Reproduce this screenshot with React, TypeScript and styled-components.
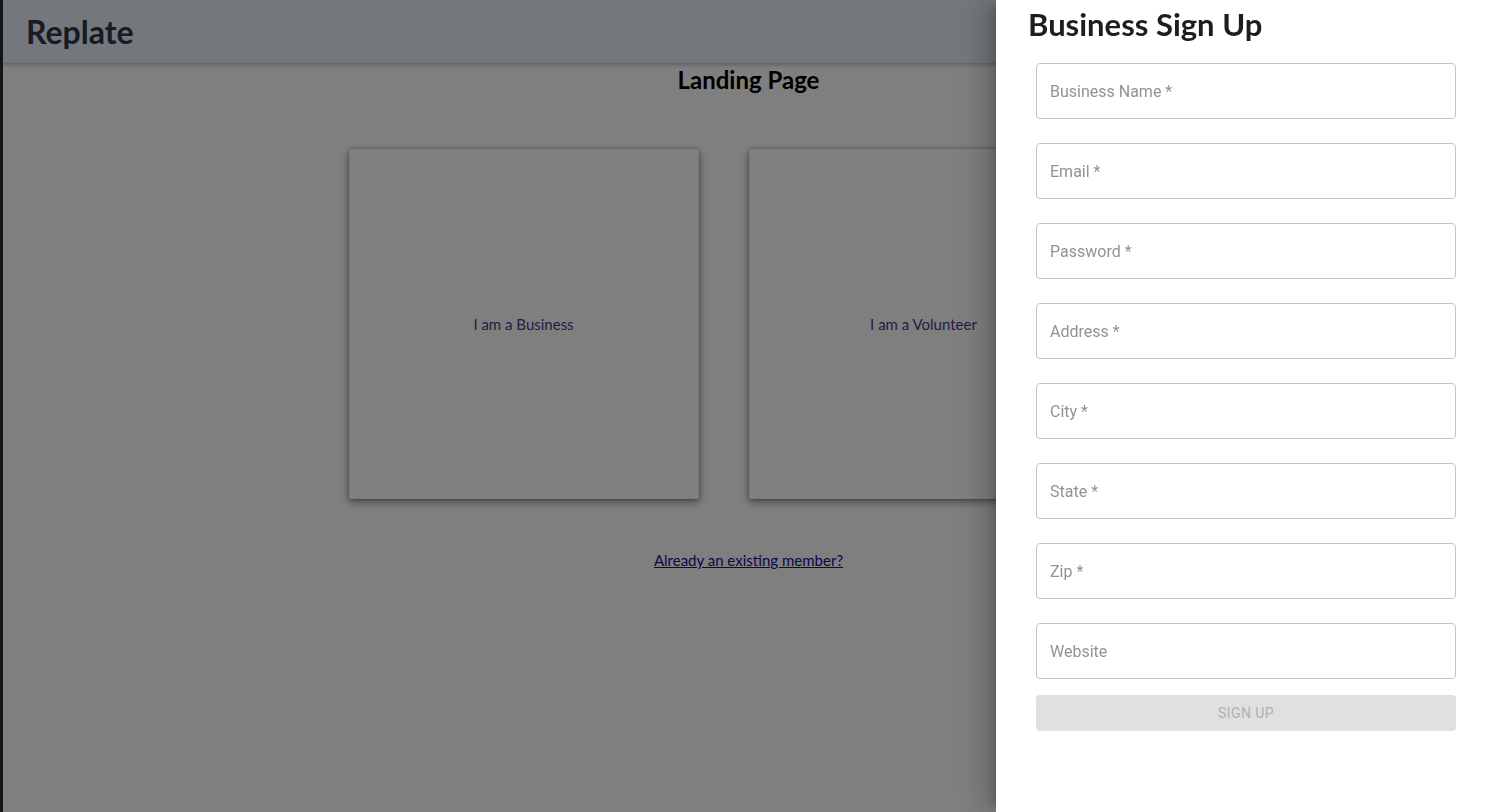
import React from 'react';
import styled, { createGlobalStyle } from 'styled-components';

// --- STYLES ---
const GlobalStyle = createGlobalStyle`
  html, body {
    margin: 0;
    padding: 0;
    height: 100%;
  }
  body {
    background: #fff;
    font-family: "Lato", "Liberation Sans", sans-serif;
    border-left: 3px solid #2a2a2a;
    overflow: hidden;
  }
`;

const Page = styled.div`
  min-height: 812px;
  display: flex;
  flex-direction: column;
  background: #fff;
`;

const Header = styled.header`
  height: 63px;
  background: #e8eef6;
  display: flex;
  align-items: center;
  padding-left: 23px;
  box-shadow: 0 2px 4px rgba(0, 0, 0, 0.25);
`;

const Brand = styled.h1`
  margin: 0;
  font-size: 32px;
  font-weight: 700;
  color: #30354c;
  letter-spacing: 0;
`;

const Main = styled.main`
  display: flex;
  flex-direction: column;
  align-items: center;
`;

const PageTitle = styled.h2`
  margin: 0;
  font-size: 24px;
  font-weight: 700;
  color: #000;
  line-height: 34px;
`;

const CardRow = styled.div`
  display: flex;
  gap: 50px;
  margin-top: 52px;
  padding-right: 50px;
`;

const Card = styled.button`
  width: 350px;
  height: 350px;
  background: #fff;
  border: none;
  border-radius: 2px;
  box-shadow: 0 3px 8px rgba(0, 0, 0, 0.45), 0 0 3px rgba(0, 0, 0, 0.3);
  font-family: "Lato", "Liberation Sans", sans-serif;
  font-size: 15px;
  color: #4a3a8a;
  cursor: pointer;
`;

const MemberLink = styled.a`
  margin-top: 52px;
  font-size: 15px;
  color: #1a0a9a;
  text-decoration: underline;
`;

const Backdrop = styled.div`
  position: fixed;
  inset: 0;
  background: rgba(0, 0, 0, 0.5);
`;

const Drawer = styled.aside`
  position: fixed;
  top: 0;
  right: 0;
  bottom: 0;
  width: 498px;
  background: #fff;
  box-shadow: -8px 0 10px -5px rgba(0, 0, 0, 0.2), -16px 0 24px 2px rgba(0, 0, 0, 0.14);
  padding: 4px 0 0 32px;
  box-sizing: border-box;
`;

const DrawerTitle = styled.h2`
  margin: 0;
  font-size: 31px;
  font-weight: 700;
  color: #1e1e1e;
  line-height: 40px;
`;

const Form = styled.form`
  width: 420px;
  margin: 19px 0 0 8px;
  display: flex;
  flex-direction: column;
  gap: 24px;
`;

const Input = styled.input`
  height: 56px;
  box-sizing: border-box;
  border: 1px solid #c4c4c4;
  border-radius: 4px;
  padding: 0 13px;
  font-family: Roboto, "Liberation Sans", sans-serif;
  font-size: 16px;
  color: #222;
  outline: none;
  &::placeholder {
    color: #929292;
  }
`;

const SubmitButton = styled.button`
  height: 36px;
  margin-top: -8px;
  border: none;
  border-radius: 4px;
  background: #e0e0e0;
  color: #b0b0b0;
  font-family: Roboto, "Liberation Sans", sans-serif;
  font-size: 14px;
  font-weight: 400;
  letter-spacing: 0.4px;
  text-transform: uppercase;
`;
// --- END STYLES ---

const fields = [
  'Business Name *',
  'Email *',
  'Password *',
  'Address *',
  'City *',
  'State *',
  'Zip *',
  'Website',
];

const App: React.FC = () => {
  return (
    <>
      <GlobalStyle />
      <Page>
        <Header>
          <Brand>Replate</Brand>
        </Header>
        <Main>
          <PageTitle>Landing Page</PageTitle>
          <CardRow>
            <Card>I am a Business</Card>
            <Card>I am a Volunteer</Card>
          </CardRow>
          <MemberLink href="#">Already an existing member?</MemberLink>
        </Main>
      </Page>
      <Backdrop />
      <Drawer>
        <DrawerTitle>Business Sign Up</DrawerTitle>
        <Form onSubmit={(e) => e.preventDefault()}>
          {fields.map((f) => (
            <Input key={f} type={f.startsWith('Password') ? 'password' : 'text'} placeholder={f} />
          ))}
          <SubmitButton type="submit" disabled>
            Sign Up
          </SubmitButton>
        </Form>
      </Drawer>
    </>
  );
};

export default App;
